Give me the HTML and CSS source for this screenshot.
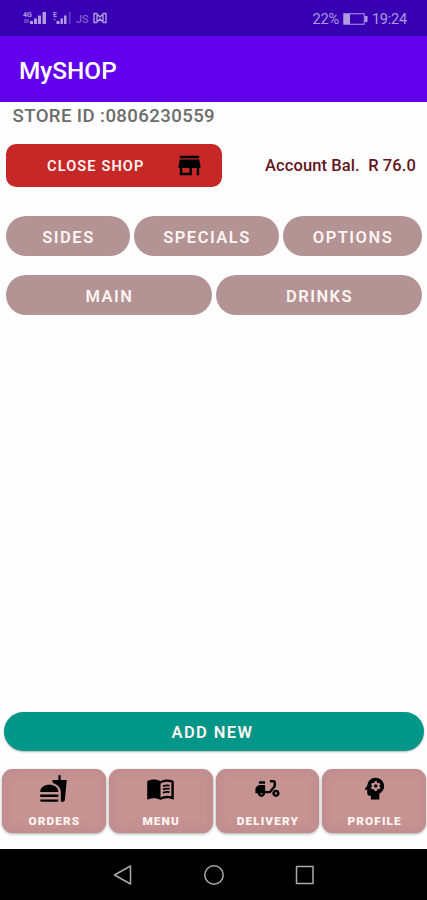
FILE: index.html
```html
<!DOCTYPE html>
<html lang="en">
<head>
    <meta charset="UTF-8">
    <meta name="viewport" content="width=device-width, initial-scale=1.0">
    <title>MySHOP</title>
    <link rel="stylesheet" href="styles.css">
</head>
<body>
    <div class="status-bar">
        <svg class="signals" width="86" height="16" viewBox="0 0 86 16" fill="currentColor">
            <text x="0" y="6.5" class="net">4G</text>
            <path opacity=".35" d="M1 9h5v4H1z"/>
            <path d="M7 11h3v3H7zM11 8.500h3V14h-3zM15 5.500h3V14h-3zM19.500 2h3.500v12h-3.500z"/>
            <text x="30" y="6.5" class="net">E</text>
            <path d="M33.500 11h3v3h-3zM37.500 8.500h2.500V14h-2.500zM41 5.500h2.500V14H41z"/>
            <path opacity=".4" d="M46 2h1.500v12H46zM30.500 8h2v3h-2z"/>
            <text x="53" y="13" class="carrier">JS</text>
            <path fill="none" stroke="currentColor" stroke-width="1.4" d="M71 12.500v-9h2.500L77 7l3.500-3.500H83v9h-2.500L77 9l-3.500 3.500zM74 5v6M80 5v6"/>
        </svg>
        <div class="status-right">
            <span>22%</span>
            <svg width="25" height="12" viewBox="0 0 25 12">
                <rect x=".75" y=".75" width="20.5" height="10.5" fill="none" stroke="currentColor" stroke-width="1"/>
                <path fill="currentColor" d="M1 1h6v10H1zM22 3h2.500v6H22z"/>
            </svg>
            <span>19:24</span>
        </div>
    </div>
    <header class="app-bar">MySHOP</header>

    <main class="content">
        <p class="store-id">STORE ID :0806230559</p>
        <div class="shop-row">
            <button class="close-btn">
                <span>CLOSE SHOP</span>
                <svg class="icon" viewBox="0 0 24 24"><path d="M20 4H4v2h16V4zm1 10v-2l-1-5H4l-1 5v2h1v6h10v-6h4v6h2v-6h1zm-9 4H6v-4h6v4z"/></svg>
            </button>
            <span class="balance">Account Bal.&nbsp; R 76.0</span>
        </div>
        <div class="category-row three">
            <button class="category">SIDES</button>
            <button class="category">SPECIALS</button>
            <button class="category">OPTIONS</button>
        </div>
        <div class="category-row two">
            <button class="category">MAIN</button>
            <button class="category">DRINKS</button>
        </div>
    </main>

    <button class="add-btn">ADD NEW</button>

    <nav class="tabs">
        <button class="tab">
            <svg class="icon" viewBox="0 0 24 24"><path d="M18.060 22.990h1.660c.84 0 1.530-.64 1.630-1.460L23 5.050h-5V1h-1.970v4.050h-4.970l.3 2.340c1.710.47 3.310 1.320 4.270 2.260 1.440 1.420 2.430 2.890 2.430 5.290v8.050zM1 21.990V21h15.030v.99c0 .55-.45 1-1.010 1H2.010c-.56 0-1.010-.45-1.010-1zm15.030-7c0-8-15.030-8-15.030 0h15.030zM1.020 17h15v2h-15z"/></svg>
            <span>ORDERS</span>
        </button>
        <button class="tab">
            <svg class="icon" viewBox="0 0 24 24"><path d="M21 5c-1.110-.35-2.330-.5-3.500-.5-1.950 0-4.050.4-5.500 1.500-1.450-1.100-3.550-1.500-5.500-1.500S2.450 4.900 1 6v14.650c0 .25.25.5.5.5.1 0 .15-.05.25-.05C3.100 20.450 5.050 20 6.500 20c1.950 0 4.050.4 5.500 1.500 1.350-.85 3.800-1.500 5.500-1.500 1.650 0 3.350.3 4.750 1.050.1.050.15.050.25.050.25 0 .5-.25.5-.5V6c-.6-.45-1.250-.75-2-1zm0 13.500c-1.100-.35-2.300-.5-3.500-.5-1.700 0-4.150.65-5.500 1.500V8c1.350-.85 3.800-1.500 5.500-1.500 1.200 0 2.400.15 3.500.5v11.500z"/><path fill="none" stroke="#000" stroke-width="1.5" d="M14 10.100c1.900-.7 3.700-.8 5.500-.5M14 12.800c1.900-.7 3.700-.8 5.500-.5M14 15.500c1.900-.7 3.700-.8 5.500-.5"/></svg>
            <span>MENU</span>
        </button>
        <button class="tab">
            <svg class="icon" viewBox="0 0 24 24"><path d="M19 7c0-1.100-.9-2-2-2h-3v2h3v2.650L13.520 14H10V9H6c-2.210 0-4 1.790-4 4v3h2c0 1.660 1.340 3 3 3s3-1.340 3-3h4.480L19 10.350V7zM7 17c-.55 0-1-.45-1-1h2c0 .55-.45 1-1 1zM5 6h5v2H5zM19 13c-1.660 0-3 1.340-3 3s1.340 3 3 3 3-1.340 3-3-1.340-3-3-3zm0 4c-.55 0-1-.45-1-1s.45-1 1-1 1 .45 1 1-.45 1-1 1z"/></svg>
            <span>DELIVERY</span>
        </button>
        <button class="tab">
            <svg class="icon" viewBox="0 0 24 24"><path d="M13 8.570c-.79 0-1.430.64-1.430 1.430s.64 1.430 1.430 1.430 1.430-.64 1.430-1.430-.64-1.430-1.430-1.430z"/><path d="M13 3C9.250 3 6.200 5.940 6.020 9.640L4.100 12.200c-.25.33-.01.8.4.8H6v3c0 1.100.9 2 2 2h1v3h7v-4.680c2.360-1.120 4-3.530 4-6.320 0-3.870-3.130-7-7-7zm3 7c0 .13-.01.26-.02.39l.83.66c.08.06.1.16.05.25l-.8 1.390c-.05.09-.16.12-.24.09l-.99-.4c-.21.16-.43.29-.67.39L14 13.830c-.01.1-.1.17-.2.17h-1.600c-.1 0-.18-.07-.2-.17l-.15-1.060c-.25-.1-.47-.23-.68-.39l-.99.4c-.09.03-.2 0-.25-.09l-.8-1.390c-.05-.08-.03-.19.05-.25l.84-.66c-.01-.13-.02-.26-.02-.39s.02-.27.04-.39l-.85-.66c-.08-.06-.1-.16-.05-.26l.8-1.380c.05-.09.15-.12.24-.09l1 .4c.2-.15.43-.29.67-.39l.15-1.060c.02-.1.1-.17.2-.17h1.600c.1 0 .18.07.2.17l.15 1.060c.24.1.46.23.67.39l1-.4c.09-.03.2 0 .24.09l.8 1.380c.05.09.03.2-.05.26l-.85.66c.03.12.04.25.04.39z"/></svg>
            <span>PROFILE</span>
        </button>
    </nav>

    <footer class="nav-bar">
        <svg viewBox="0 0 20 22"><path d="M17.500 2v18L1.500 11z"/></svg>
        <svg viewBox="0 0 20 22"><circle cx="10" cy="11" r="9.2"/></svg>
        <svg viewBox="0 0 20 22"><path d="M1.500 2.500h16.500v17H1.500z"/></svg>
    </footer>
</body>
</html>
```
FILE: styles.css
```css
* {
    box-sizing: border-box;
}
body {
    font-family: Roboto, "Liberation Sans", sans-serif;
    background-color: #fefefe;
    margin: 0;
    height: 900px;
    display: flex;
    flex-direction: column;
    overflow: hidden;
}
button {
    font-family: inherit;
    font-weight: 600;
    color: #fff5f3;
    border: none;
    padding: 0;
    cursor: pointer;
}
.icon {
    width: 29px;
    height: 29px;
    fill: #000;
    flex: none;
}

/* Status bar and title */
.status-bar {
    height: 36px;
    padding: 2px 20px 0 23px;
    background-color: #3700b3;
    color: #b09be0;
    display: flex;
    align-items: center;
    justify-content: space-between;
}
.signals {
    margin-top: -2px;
}
.net {
    font-size: 7px;
    font-weight: 700;
}
.carrier {
    font-size: 11px;
    font-weight: 500;
    opacity: 0.6;
}
.status-right {
    display: flex;
    align-items: center;
    gap: 4px;
    font-size: 14.5px;
    letter-spacing: -0.2px;
}
.app-bar {
    height: 66px;
    padding-left: 19px;
    background-color: #6200ee;
    color: #fff;
    font-size: 24.4px;
    font-weight: 500;
    line-height: 69px;
}

/* Page content */
.content {
    flex: 1;
    padding: 0 5px 0 6px;
}
.store-id {
    margin: 3px 0 0 6.5px;
    color: #6c6c6c;
    font-size: 18.6px;
    font-weight: 500;
    line-height: 22px;
    letter-spacing: 0.4px;
}
.shop-row {
    margin-top: 17px;
    padding-right: 6px;
    display: flex;
    align-items: center;
    justify-content: space-between;
}
.close-btn {
    width: 216px;
    height: 43px;
    padding: 0 18px 0 41px;
    border-radius: 10px;
    background-color: #c62828;
    display: flex;
    align-items: center;
    justify-content: space-between;
    font-size: 14.6px;
    letter-spacing: 1.1px;
}
.balance {
    color: #641420;
    font-size: 16.5px;
    font-weight: 500;
    letter-spacing: 0.1px;
}
.category-row {
    display: grid;
    gap: 4px;
    margin-top: 19px;
}
.category-row.three {
    grid-template-columns: 124px 145px 1fr;
    margin-top: 29px;
}
.category-row.two {
    grid-template-columns: 1fr 1fr;
}
.category {
    height: 40px;
    padding: 2px 0 0 1px;
    border-radius: 20px;
    background-color: #b39393;
    font-size: 16.5px;
    letter-spacing: 1.5px;
}

/* Bottom actions */
.add-btn {
    height: 39px;
    margin: 0 3px 18px 4px;
    padding: 1px 3px 0 0;
    border-radius: 20px;
    background-color: #009688;
    box-shadow: 0 1px 2px rgba(0, 0, 0, 0.3);
    font-size: 16.5px;
    letter-spacing: 1.4px;
}
.tabs {
    display: grid;
    grid-template-columns: repeat(4, 1fr);
    gap: 3px;
    padding: 0 1px 0 2px;
    margin-bottom: 16px;
}
.tab {
    height: 64px;
    padding-top: 5px;
    border-radius: 11px;
    background-color: #c69292;
    box-shadow: 0 1px 3px rgba(0, 0, 0, 0.35), inset 0 0 9px 3px #bf8c8e;
    display: flex;
    flex-direction: column;
    align-items: center;
    font-size: 11.8px;
    font-weight: 900;
    line-height: 14px;
    letter-spacing: 1.1px;
}
.tab span {
    margin: 11px 0 0 1px;
}
.nav-bar {
    height: 51px;
    background-color: #000;
    display: flex;
    align-items: center;
    justify-content: center;
    gap: 71px;
}
.nav-bar svg {
    width: 20px;
    height: 22px;
    fill: none;
    stroke: #aaa;
    stroke-width: 1.5;
    stroke-linejoin: round;
}
```
